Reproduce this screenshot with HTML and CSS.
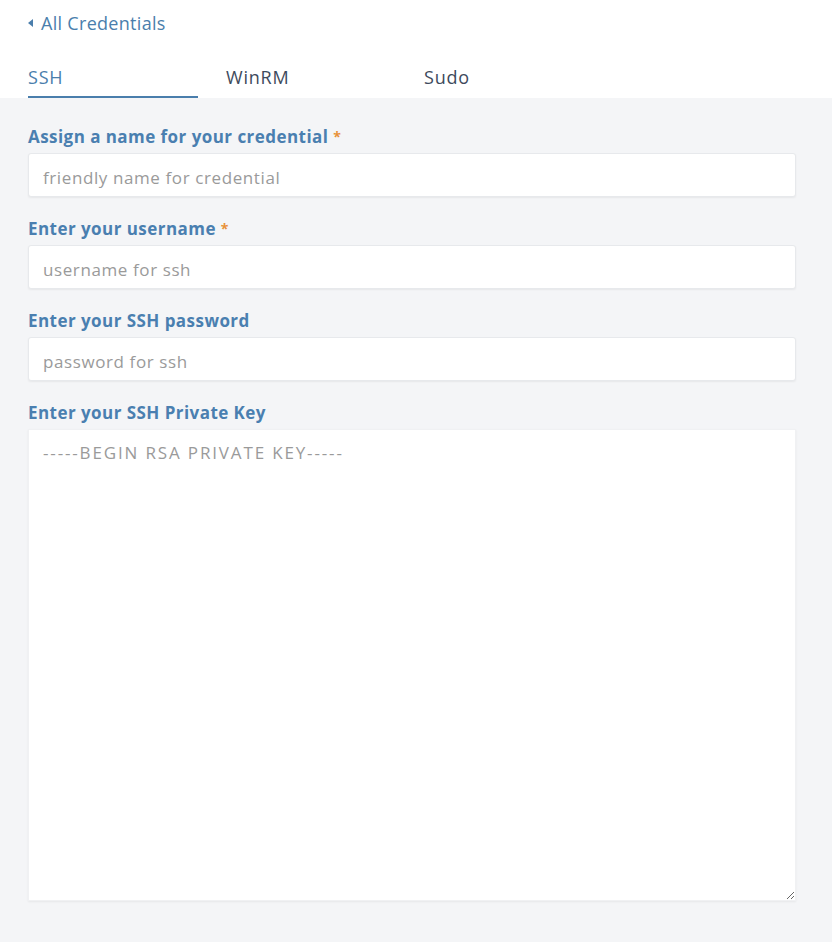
FILE: index.html
```html
<!DOCTYPE html>
<html>
<head>
<meta charset="utf-8">
<link rel="stylesheet" href="styles.css">
</head>
<body>
<div class="header">
  <a class="back" href="#"><span class="caret"></span>All Credentials</a>
  <div class="tabs">
    <div class="tab active">SSH</div>
    <div class="tab">WinRM</div>
    <div class="tab">Sudo</div>
  </div>
</div>
<div class="form">
  <div class="field">
    <label class="label">Assign a name for your credential <span class="req">*</span></label>
    <input class="input" type="text" placeholder="friendly name for credential">
  </div>
  <div class="field">
    <label class="label">Enter your username <span class="req">*</span></label>
    <input class="input" type="text" placeholder="username for ssh">
  </div>
  <div class="field">
    <label class="label">Enter your SSH password</label>
    <input class="input" type="password" placeholder="password for ssh">
  </div>
  <div class="field">
    <label class="label">Enter your SSH Private Key</label>
    <textarea class="textarea" placeholder="-----BEGIN RSA PRIVATE KEY-----"></textarea>
  </div>
</div>
</body>
</html>
```
FILE: styles.css
```css
html, body {
  margin: 0;
  padding: 0;
  background: #f4f5f7;
  font-family: "Open Sans", Lato, sans-serif;
}
.header {
  background: #fff;
  height: 98px;
  padding: 0 28px;
  box-sizing: border-box;
  display: flex;
  flex-direction: column;
}
.back {
  display: flex;
  align-items: center;
  margin-top: 12px;
  height: 22px;
  color: #4a7eac;
  font-size: 18px;
  letter-spacing: 0.3px;
  text-decoration: none;
}
.caret {
  width: 0;
  height: 0;
  border-top: 4px solid transparent;
  border-bottom: 4px solid transparent;
  border-right: 5px solid #4a7eac;
  margin-right: 8px;
}
.tabs {
  display: flex;
  margin-top: 30px;
}
.tab {
  width: 170px;
  margin-right: 28px;
  height: 34px;
  font-size: 18px;
  letter-spacing: 0.8px;
  color: #3d4a5c;
  box-sizing: border-box;
  line-height: 24px;
  padding-top: 1px;
}
.tab.active {
  color: #4a7eac;
  border-bottom: 2.5px solid #4a7eac;
}
.form {
  padding: 27px 36px 0 28px;
}
.field {
  display: flex;
  flex-direction: column;
  margin-bottom: 20px;
}
.label {
  font-size: 17px;
  font-weight: 700;
  letter-spacing: 0.45px;
  color: #4a7fb0;
  height: 24px;
  line-height: 24px;
  margin-bottom: 4px;
}
.req {
  color: #e8913a;
  font-size: 14px;
  vertical-align: top;
}
.input, .textarea {
  font-family: "Open Sans", Lato, sans-serif;
  font-size: 17px;
  letter-spacing: 0.6px;
  background: #fff;
  border: 1px solid #e7e9ec;
  border-radius: 3px;
  box-shadow: 0 1px 2px rgba(0,0,0,0.06);
  outline: none;
  box-sizing: border-box;
  color: #333;
}
.input {
  height: 44px;
  padding: 4px 14px 0;
}
.textarea {
  height: 472px;
  padding: 11px 14px;
  resize: vertical;
  border-color: #f0f1f3;
  border-radius: 0;
}
.textarea::placeholder {
  letter-spacing: 1.85px;
}
.input::placeholder, .textarea::placeholder {
  color: #9a9a9a;
}
```
